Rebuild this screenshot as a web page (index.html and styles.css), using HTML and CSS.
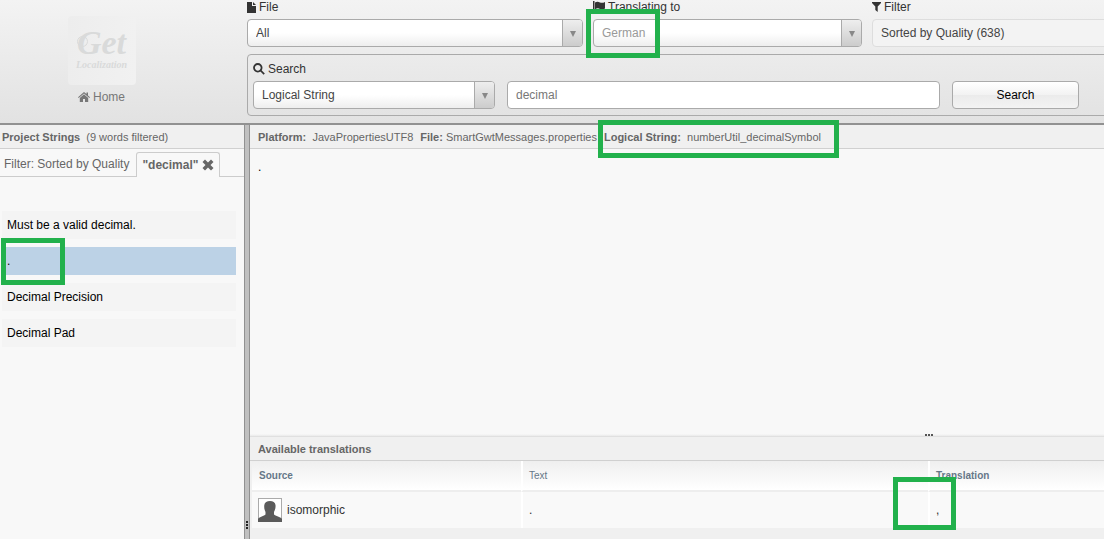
FILE: index.html
```html
<!DOCTYPE html>
<html lang="en">

<head>
    <meta charset="UTF-8">
    <meta name="viewport" content="width=device-width, initial-scale=1.0">
    <title>Get Localization</title>
    <link rel="stylesheet" href="styles.css">
</head>

<body>
    <div class="page">
        <header class="header">
            <div class="brand">
                <div class="brand__logo">
                    <span class="brand__get">Get</span>
                    <span class="brand__loc">Localization</span>
                </div>
                <a class="brand__home" href="#">
                    <svg class="icon" width="12" height="12" viewBox="0 0 12 12">
                        <path d="M6 1 0 6.2l.7.8L6 2.5 11.3 7l.7-.8-2-1.8V1.6H8.5v1.5z" />
                        <path d="M6 3.3 1.8 6.9V11H5V8h2v3h3.2V6.9z" />
                    </svg>
                    Home
                </a>
            </div>

            <div class="tools">
                <div class="fields">
                    <div class="field">
                        <label class="label" for="file">
                            <svg class="icon" width="9" height="11" viewBox="0 0 9 11">
                                <path d="M0 0h5v4h4v7H0zM6 0l3 3H6z" />
                            </svg>
                            File
                        </label>
                        <div class="select">
                            <select class="select__inp" id="file">
                                <option>All</option>
                            </select>
                        </div>
                    </div>
                    <div class="field">
                        <label class="label" for="lang">
                            <svg class="icon" width="12" height="12" viewBox="0 0 12 12">
                                <path d="M0 0h1.500v12H0zM2 1.400c2-1.200 3.500-.8 5 0 1.400.7 3 .6 5-.4v6.500c-2 1.200-3.600 1.100-5 .4-1.500-.8-3-.8-5 .4z" />
                            </svg>
                            Translating to
                        </label>
                        <div class="select">
                            <select class="select__inp select__inp--muted" id="lang">
                                <option>German</option>
                            </select>
                        </div>
                    </div>
                    <div class="field">
                        <label class="label" for="filter">
                            <svg class="icon" width="9" height="10" viewBox="0 0 9 10">
                                <path d="M0 0h9v1L5.7 4.5V10L3.3 8V4.5L0 1z" />
                            </svg>
                            Filter
                        </label>
                        <div class="select select--flat">
                            <select class="select__inp" id="filter">
                                <option>Sorted by Quality (638)</option>
                            </select>
                        </div>
                    </div>
                </div>

                <form class="search">
                    <label class="label" for="query">
                        <svg class="icon" width="12" height="12" viewBox="0 0 12 12">
                            <circle cx="4.8" cy="4.8" r="3.8" fill="none" stroke="currentColor" stroke-width="1.8" />
                            <path d="M7.8 6.6 11.8 10.6l-1.2 1.2-4-4z" />
                        </svg>
                        Search
                    </label>
                    <div class="search__row">
                        <div class="select search__type">
                            <select class="select__inp" aria-label="Search in">
                                <option>Logical String</option>
                            </select>
                        </div>
                        <input class="search__inp" id="query" type="text" value="decimal">
                        <button class="search__btn" type="button">Search</button>
                    </div>
                </form>
            </div>
        </header>

        <div class="content">
            <aside class="sidebar">
                <div class="bar"><b>Project Strings</b><span class="bar__note">(9 words filtered)</span></div>
                <div class="tabs">
                    <a class="tab" href="#">Filter: Sorted by Quality</a>
                    <div class="tab tab--active">
                        "decimal"
                        <button class="tab__close" type="button" aria-label="Close">
                            <svg class="icon" width="12" height="12" viewBox="0 0 12 12">
                                <path d="M3 .5 6 3.5l3-3L11.5 3l-3 3 3 3L9 11.5l-3-3-3 3L.5 9l3-3-3-3z" />
                            </svg>
                        </button>
                    </div>
                </div>
                <ul class="strings">
                    <li class="string">Must be a valid decimal.</li>
                    <li class="string string--active">.</li>
                    <li class="string">Decimal Precision</li>
                    <li class="string">Decimal Pad</li>
                </ul>
            </aside>

            <div class="splitter"><span class="splitter__dots"></span></div>

            <main class="main">
                <div class="bar bar--info">
                    <span><b>Platform:</b>&nbsp; JavaPropertiesUTF8</span>
                    <span><b>File:</b> SmartGwtMessages.properties</span>
                    <span><b>Logical String:</b>&nbsp; numberUtil_decimalSymbol</span>
                </div>
                <div class="source">.</div>
                <div class="divider"><span class="divider__dots"></span></div>
                <div class="bar bar--info"><b>Available translations</b></div>
                <table class="table">
                    <thead>
                        <tr>
                            <th class="table__source">Source</th>
                            <th class="table__text">Text</th>
                            <th>Translation</th>
                        </tr>
                    </thead>
                    <tbody>
                        <tr>
                            <td>
                                <div class="user">
                                    <svg class="user__img" width="24" height="24" viewBox="0 0 24 24">
                                        <rect x=".5" y=".5" width="23" height="23" fill="#fff" stroke="#aaa" />
                                        <path fill="#5b5b5b" d="M0 24v-3c1-2 5-2.500 7.500-4.500V14C6.500 12 6 10 6.300 7 6.600 4.500 9 3 12 3s5.200 1.500 5.500 4c.3 3-.5 5-1.500 7v2.500c2.500 2 7 2.500 8 4.500v3z" />
                                    </svg>
                                    isomorphic
                                </div>
                            </td>
                            <td>.</td>
                            <td>,</td>
                        </tr>
                    </tbody>
                </table>
            </main>
        </div>

        <div class="mark mark--lang"></div>
        <div class="mark mark--logical"></div>
        <div class="mark mark--string"></div>
        <div class="mark mark--translation"></div>
    </div>
</body>

</html>
```
FILE: styles.css
```css
* {
    padding: 0;
    margin: 0;
    box-sizing: border-box;
}

body {
    font-family: 'Liberation Sans', Arial, sans-serif;
    font-size: 12px;
    line-height: 14px;
    color: #333;
    background-color: #f8f8f8;
}

.page {
    position: relative;
    display: flex;
    flex-direction: column;
    min-height: 100vh;
    overflow: hidden;
}

.icon {
    display: block;
    flex: none;
    fill: currentColor;
}

/* header */
.header {
    display: flex;
    padding-bottom: 7px;
    background: linear-gradient(#f3f3f3, #e2e2e2);
    border-bottom: 2px solid #919191;
}

.brand {
    flex: none;
    width: 247px;
    padding: 16px 44px 0 0;
    display: flex;
    flex-direction: column;
    align-items: center;
    gap: 5px;
}

.brand__logo {
    position: relative;
    width: 68px;
    height: 69px;
    padding-top: 11px;
    display: flex;
    flex-direction: column;
    align-items: center;
    border-radius: 4px;
    background: linear-gradient(90deg, #ededed, #f1f1f1);
    color: #d9dada;
    font-family: 'Liberation Serif', serif;
    font-style: italic;
    font-weight: bold;
}

/* curl in front of the G */
.brand__logo::before {
    content: '';
    position: absolute;
    left: 9px;
    top: 20px;
    width: 9px;
    height: 9px;
    border: 1px solid #d9dada;
    border-radius: 50%;
}

.brand__get {
    font-size: 34px;
    line-height: 32px;
}

.brand__loc {
    font-size: 10px;
    line-height: 12px;
}

.brand__home {
    display: flex;
    align-items: center;
    gap: 3px;
    color: #777;
    text-decoration: none;
}

.tools {
    flex: 1;
    min-width: 0;
    margin-right: -10px;
}

.fields {
    display: grid;
    grid-template-columns: 336fr 269fr 242fr;
    gap: 10px;
}

.label {
    display: flex;
    align-items: center;
    gap: 3px;
}

.field .label {
    height: 19px;
    padding-bottom: 5px;
}

.select {
    position: relative;
    height: 28px;
    border: 1px solid #aaa;
    border-radius: 4px;
    overflow: hidden;
    background: linear-gradient(#fff 50%, #eee);
}

.select::before {
    content: '';
    position: absolute;
    top: 0;
    right: 0;
    bottom: 0;
    width: 19px;
    border-left: 1px solid #aaa;
    background: linear-gradient(#eee, #ccc);
}

.select::after {
    content: '';
    position: absolute;
    top: 11px;
    right: 6px;
    border: 3px solid transparent;
    border-top: 6px solid #888;
    border-bottom: 0;
}

.select--flat {
    border-color: #ddd;
    background: #f3f3f3;
}

.select--flat::before,
.select--flat::after {
    display: none;
}

.select__inp {
    position: relative;
    width: 100%;
    height: 26px;
    padding-left: 8px;
    border: 0;
    appearance: none;
    background: transparent;
    font: inherit;
    color: #444;
}

.select__inp--muted {
    color: #999;
}

.search {
    margin-top: 7px;
    padding: 7px 34px 6px 5px;
    border: 1px solid #aaa;
    border-radius: 4px;
}

.search__row {
    display: flex;
    gap: 12px;
    margin-top: 5px;
}

.search__type {
    flex: none;
    width: 242px;
}

.search__inp {
    flex: 1;
    min-width: 0;
    height: 28px;
    padding: 0 8px;
    border: 1px solid #aaa;
    border-radius: 4px;
    font: inherit;
    color: #777;
}

.search__btn {
    width: 127px;
    height: 28px;
    border: 1px solid #aaa;
    border-radius: 4px;
    background: linear-gradient(#fff, #f2f2f2 50%, #ebebeb 50%, #f3f3f3);
    font: inherit;
    color: #000;
}

/* content */
.content {
    flex: 1;
    display: flex;
}

.bar {
    height: 24px;
    padding: 0 2px;
    display: flex;
    align-items: center;
    border-bottom: 1px solid #d0d0d0;
    background-color: #f0f0f0;
    font-size: 11px;
    color: #666;
    white-space: nowrap;
}

.bar--info {
    padding: 0 8px;
    gap: 7px;
}

.bar__note {
    margin-left: 6px;
}

.sidebar {
    flex: none;
    width: 244px;
}

.tabs {
    height: 28px;
    display: flex;
    align-items: flex-end;
    border-bottom: 1px solid #ccc;
}

.tab {
    height: 24px;
    padding: 0 7px 0 4px;
    display: flex;
    align-items: center;
    color: #666;
    text-decoration: none;
}

.tab--active {
    height: 25px;
    margin-bottom: -1px;
    padding: 0 5px;
    gap: 4px;
    border: 1px solid #ccc;
    border-bottom: 0;
    border-radius: 3px 3px 0 0;
    background-color: #f8f8f8;
    font-weight: bold;
}

.tab__close {
    border: 0;
    background: none;
    color: #666;
}

.strings {
    padding: 34px 8px 0 2px;
    display: grid;
    gap: 8px;
    list-style: none;
}

.string {
    padding: 7px 5px;
    background-color: #f4f4f4;
    color: #000;
}

.string--active {
    background-color: #bcd2e6;
}

.splitter {
    flex: none;
    position: relative;
    width: 6px;
    border: 1px solid #919191;
    border-top: 0;
    border-bottom: 0;
    background-color: #c0c0c0;
}

.splitter__dots {
    position: absolute;
    left: 1px;
    bottom: 10px;
    width: 2px;
    height: 8px;
    background: repeating-linear-gradient(#222 0 2px, transparent 2px 3px);
}

.main {
    flex: 1;
    min-width: 0;
    display: flex;
    flex-direction: column;
    background-color: #f0f0f0;
}

.source {
    flex: 1;
    padding: 11px 8px;
    background-color: #f8f8f8;
    color: #000;
}

.divider {
    position: relative;
    height: 3px;
    border-bottom: 1px solid #e0e0e0;
    background: linear-gradient(#f8f8f8, #eaeaea);
}

.divider__dots {
    position: absolute;
    left: calc(50% + 248px);
    bottom: 0;
    width: 8px;
    height: 2px;
    background: repeating-linear-gradient(90deg, #555 0 2px, transparent 2px 3px);
}

.table {
    width: 100%;
    margin-bottom: 11px;
    padding-left: 2px;
    border-collapse: separate;
    border-spacing: 0;
    table-layout: fixed;
}

.table th {
    height: 31px;
    padding: 0 7px;
    border-bottom: 2px solid #eee;
    background: linear-gradient(#efefef, #fff);
    font-size: 10px;
    line-height: 12px;
    text-align: left;
    color: #678;
}

.table td {
    height: 36px;
    padding: 0 6px;
    background-color: #f9f9f9;
}

.table th + th,
.table td + td {
    border-left: 2px solid #fff;
}

.table th + th {
    padding-left: 6px;
}

.table__source {
    width: 269px;
}

.table__text {
    width: 407px;
}

.table .table__text {
    font-weight: normal;
}

.user {
    display: flex;
    align-items: center;
    gap: 5px;
}

.user__img {
    flex: none;
}

/* highlight frames drawn over the page */
.mark {
    position: absolute;
    border: 5px solid #22b14c;
    pointer-events: none;
}

.mark--lang {
    left: 586px;
    top: 9px;
    width: 74px;
    height: 49px;
}

.mark--logical {
    left: 598px;
    top: 120px;
    width: 241px;
    height: 38px;
}

.mark--string {
    left: 1px;
    top: 238px;
    width: 64px;
    height: 47px;
}

.mark--translation {
    left: 893px;
    top: 477px;
    width: 63px;
    height: 53px;
}
```
